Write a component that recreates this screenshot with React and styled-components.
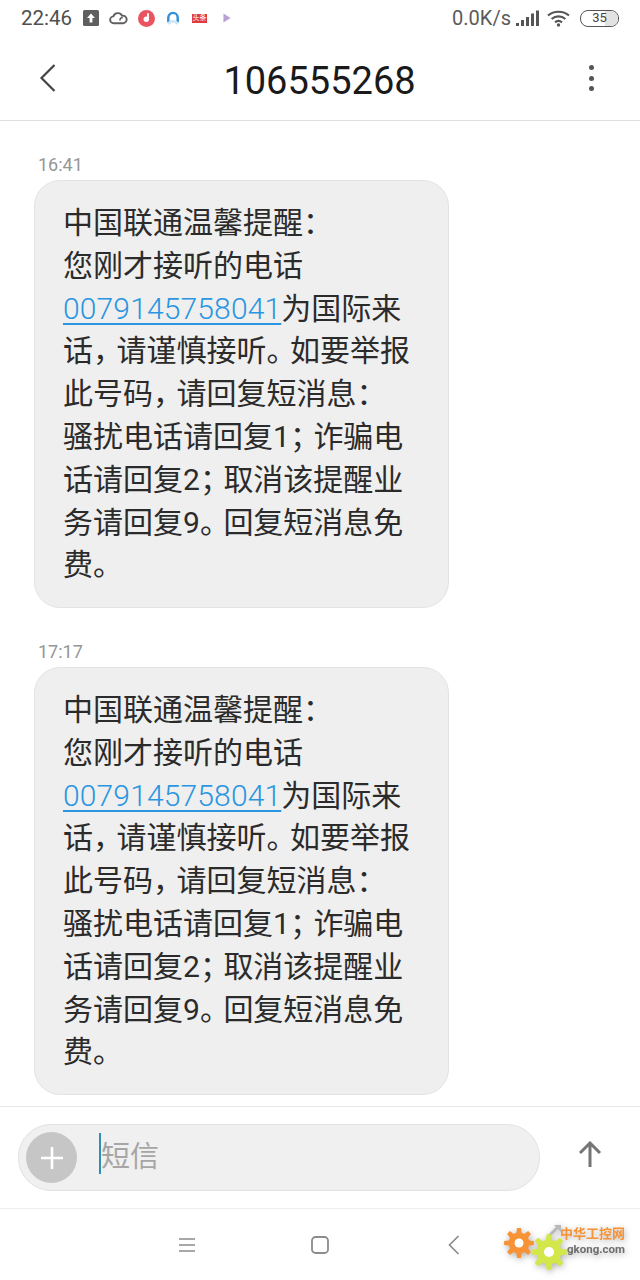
import React from 'react';
import styled, { createGlobalStyle } from 'styled-components';

const GlobalStyle = createGlobalStyle`
  html, body {
    margin: 0;
    padding: 0;
    background: #fff;
  }
  body {
    font-family: Roboto, 'Noto Sans CJK SC', sans-serif;
  }
`;

const gearPoints = (cx, cy, outer, inner, teeth) => {
  const pts = [];
  const step = (Math.PI * 2) / teeth;
  for (let i = 0; i < teeth; i++) {
    const a = i * step - Math.PI / 2;
    const corners = [
      [inner, a - step * 0.32],
      [outer, a - step * 0.17],
      [outer, a + step * 0.17],
      [inner, a + step * 0.32],
    ];
    corners.forEach(([r, t]) => {
      pts.push(`${(cx + r * Math.cos(t)).toFixed(1)},${(cy + r * Math.sin(t)).toFixed(1)}`);
    });
  }
  return pts.join(' ');
};

const Message = ({ time }) => (
  <MessageGroup>
    <Time>{time}</Time>
    <Bubble>
      <Line>中国联通温馨提醒<Punct>：</Punct></Line>
      <Line>您刚才接听的电话</Line>
      <Line><PhoneLink>0079145758041</PhoneLink>为国际来</Line>
      <Line>话<Punct>，</Punct>请谨慎接听<Punct>。</Punct>如要举报</Line>
      <Line>此号码<Punct>，</Punct>请回复短消息<Punct>：</Punct></Line>
      <Line>骚扰电话请回复1<Punct>；</Punct>诈骗电</Line>
      <Line>话请回复2<Punct>；</Punct>取消该提醒业</Line>
      <Line>务请回复9<Punct>。</Punct>回复短消息免</Line>
      <Line>费<Punct>。</Punct></Line>
    </Bubble>
  </MessageGroup>
);

const App = () => (
  <>
    <GlobalStyle />
    <Page>
      <StatusBar>
        <StatusLeft>
          <Clock>22:46</Clock>
          <svg width="16" height="16" viewBox="0 0 16 16">
            <rect width="16" height="16" rx="1.5" fill="#5f5f5f" />
            <path d="M8 3.5 12 8H9.4v4.5H6.6V8H4z" fill="#fff" />
          </svg>
          <svg width="19" height="14" viewBox="0 0 20 14">
            <path d="M5 12.5a3.6 3.6 0 0 1-.4-7.2A5 5 0 0 1 13.8 4.6 4 4 0 1 1 15 12.5Z" fill="none" stroke="#5f5f5f" strokeWidth="2" />
            <path d="M11.5 9.5a3 3 0 0 1 3-3" fill="none" stroke="#5f5f5f" strokeWidth="1.6" />
          </svg>
          <svg width="17" height="17" viewBox="0 0 18 18">
            <circle cx="9" cy="9" r="9" fill="#ea5460" />
            <path d="M10.6 3.5v6.2" stroke="#fff" strokeWidth="2" />
            <circle cx="8.8" cy="9.8" r="2.9" fill="#fff" />
          </svg>
          <BlueArc width="14" height="15" viewBox="0 0 14 16">
            <path d="M2 12V7a5 5 0 0 1 10 0v5" fill="none" stroke="#2f8fd8" strokeWidth="2.6" />
            <path d="M2 14c2-4 8-4 10 0" fill="none" stroke="#cfe6f6" strokeWidth="3" />
          </BlueArc>
          <NewsBadge><span>头条</span></NewsBadge>
          <svg width="8" height="10" viewBox="0 0 9 11">
            <path d="M0.5 0.5 8.5 5.5 0.5 10.5Z" fill="#b9a3d4" />
          </svg>
        </StatusLeft>
        <StatusRight>
          <Speed>0.0K/s</Speed>
          <svg width="23" height="17" viewBox="0 0 23 17">
            <g fill="#555">
              <rect x="0" y="13" width="3" height="3" />
              <rect x="5" y="10" width="3" height="6" />
              <rect x="10" y="7" width="3" height="9" />
              <rect x="15" y="3.5" width="3" height="12.5" />
              <rect x="20" y="0.5" width="3" height="15.5" />
            </g>
          </svg>
          <WifiIcon width="23" height="17" viewBox="0 0 23 17">
            <g fill="none" stroke="#555" strokeWidth="2.2">
              <path d="M1 5.5c6-5 15-5 21 0" />
              <path d="M4.6 9c4-3.4 9.8-3.4 13.8 0" />
              <path d="M8 12.3c2-1.6 5-1.6 7 0" />
            </g>
            <circle cx="11.5" cy="15" r="1.7" fill="#555" />
          </WifiIcon>
          <Battery>
            <BatteryFill />
            <BatteryText>35</BatteryText>
          </Battery>
        </StatusRight>
      </StatusBar>

      <Header>
        <HeaderButton>
          <svg width="18" height="30" viewBox="0 0 18 30">
            <path d="M15.5 2 2.5 15l13 13" fill="none" stroke="#444" strokeWidth="2.2" />
          </svg>
        </HeaderButton>
        <Title>106555268</Title>
        <HeaderButton>
          <Dots>
            <Dot />
            <Dot />
            <Dot />
          </Dots>
        </HeaderButton>
      </Header>

      <MessageList>
        <Message time="16:41" />
        <Message time="17:17" />
      </MessageList>

      <Composer>
        <InputPill>
          <PlusButton>
            <svg width="24" height="24" viewBox="0 0 24 24">
              <path d="M12 1v22M1 12h22" stroke="#fff" strokeWidth="2.6" />
            </svg>
          </PlusButton>
          <Caret />
          <Placeholder>短信</Placeholder>
        </InputPill>
        <SendButton>
          <svg width="24" height="27" viewBox="0 0 24 27">
            <path d="M12 26V2M2 12 12 2l10 10" fill="none" stroke="#757575" strokeWidth="3" />
          </svg>
        </SendButton>
      </Composer>

      <NavBar>
        <NavSlot>
          <svg width="18" height="16" viewBox="0 0 18 16">
            <path d="M1 2h16M1 8h16M1 14h16" stroke="#8c8c8c" strokeWidth="1.6" />
          </svg>
        </NavSlot>
        <NavSlot>
          <svg width="18" height="18" viewBox="0 0 18 18">
            <rect x="1" y="1" width="16" height="16" rx="3.5" fill="none" stroke="#8c8c8c" strokeWidth="1.8" />
          </svg>
        </NavSlot>
        <NavSlot>
          <svg width="12" height="20" viewBox="0 0 12 20">
            <path d="M10.5 1 1.5 10l9 9" fill="none" stroke="#8c8c8c" strokeWidth="1.7" />
          </svg>
        </NavSlot>
      </NavBar>

      <Watermark>
        <svg width="76" height="56" viewBox="0 0 76 56">
          <path d="M44 14 55 3" stroke="#b9b9b9" strokeWidth="3" />
          <path d="M50 2h7v7z" fill="#b9b9b9" />
          <polygon points={gearPoints(15, 20, 15, 10.5, 8)} fill="#f79334" />
          <circle cx="15" cy="20" r="4.5" fill="#fff" />
          <polygon points={gearPoints(45, 29, 18, 12.5, 8)} fill="#d3e64a" />
          <circle cx="45" cy="29" r="5" fill="#fff" />
        </svg>
        <WatermarkText>
          <WatermarkCn>中华工控网</WatermarkCn>
          <WatermarkEn>gkong.com</WatermarkEn>
        </WatermarkText>
      </Watermark>
    </Page>
  </>
);

export default App;

const Page = styled.div`
  position: relative;
  width: 640px;
  height: 1280px;
  display: flex;
  flex-direction: column;
  overflow: hidden;
  background: #fff;
`;

const StatusBar = styled.div`
  height: 36px;
  padding: 0 21px;
  display: flex;
  align-items: center;
  justify-content: space-between;
`;

const StatusLeft = styled.div`
  display: flex;
  align-items: center;
  gap: 10px;
`;

const Clock = styled.span`
  font-size: 20.5px;
  color: #4f4f4f;
  margin-right: 1px;
`;

const BlueArc = styled.svg`
  margin-left: 1px;
`;

const NewsBadge = styled.div`
  width: 15px;
  height: 9px;
  margin: 0 6px 0 2px;
  background: #e0393e;
  display: flex;
  align-items: center;
  justify-content: center;
  overflow: hidden;
  span {
    font-size: 7px;
    line-height: 9px;
    color: #fff;
    white-space: nowrap;
  }
`;

const StatusRight = styled.div`
  display: flex;
  align-items: center;
`;

const Speed = styled.span`
  font-size: 20px;
  color: #5a5a5a;
  margin-right: 5px;
`;

const WifiIcon = styled.svg`
  margin: 0 10px 0 8px;
`;

const Battery = styled.div`
  position: relative;
  width: 39px;
  height: 17px;
  box-sizing: border-box;
  border: 1.5px solid #555;
  border-radius: 8px;
  overflow: hidden;
  display: flex;
  align-items: center;
  justify-content: center;
`;

const BatteryFill = styled.div`
  position: absolute;
  top: 0;
  bottom: 0;
  right: 0;
  width: 13px;
  background: #e2e2e2;
`;

const BatteryText = styled.span`
  position: relative;
  font-size: 13px;
  line-height: 14px;
  color: #444;
`;

const Header = styled.div`
  height: 85px;
  padding: 0 39px 0 38px;
  box-sizing: border-box;
  border-bottom: 1px solid #dedede;
  display: flex;
  align-items: center;
  justify-content: space-between;
`;

const HeaderButton = styled.div`
  width: 20px;
  display: flex;
  justify-content: center;
`;

const Title = styled.div`
  margin-top: 6px;
  font-size: 38px;
  color: #1a1a1a;
`;

const Dots = styled.div`
  display: flex;
  flex-direction: column;
  gap: 5.5px;
`;

const Dot = styled.span`
  width: 5px;
  height: 5px;
  border-radius: 50%;
  background: #555;
`;

const MessageList = styled.div`
  flex: 1;
  padding: 32px 0 0 34px;
  display: flex;
  flex-direction: column;
  gap: 32px;
  overflow: hidden;
`;

const MessageGroup = styled.div`
  display: flex;
  flex-direction: column;
  align-items: flex-start;
`;

const Time = styled.div`
  margin-left: 4px;
  height: 27px;
  line-height: 24px;
  font-size: 18px;
  color: #969696;
`;

const Bubble = styled.div`
  width: 415px;
  height: 428px;
  box-sizing: border-box;
  padding: 21px 0 0 28px;
  background: #efefef;
  border: 1px solid #e3e3e3;
  border-radius: 26px;
`;

const Line = styled.div`
  height: 42.8px;
  line-height: 42.8px;
  font-size: 30px;
  color: #2b2b2b;
  white-space: nowrap;
`;

const Punct = styled.span`
  letter-spacing: -6.5px;
`;

const PhoneLink = styled.span`
  font-weight: 300;
  letter-spacing: 0.15px;
  color: #2a95e0;
  text-decoration: underline;
  text-underline-offset: 4px;
  text-decoration-thickness: 1.5px;
`;

const Composer = styled.div`
  height: 103px;
  box-sizing: border-box;
  border-top: 1px solid #e6e6e6;
  border-bottom: 1px solid #eeeeee;
  padding-left: 18px;
  display: flex;
  align-items: center;
`;

const InputPill = styled.div`
  width: 522px;
  height: 67px;
  box-sizing: border-box;
  padding-left: 7px;
  background: #f0f0f0;
  border: 1px solid #e2e2e2;
  border-radius: 33px;
  display: flex;
  align-items: center;
`;

const PlusButton = styled.div`
  width: 51px;
  height: 51px;
  border-radius: 50%;
  background: #c6c6c6;
  display: flex;
  align-items: center;
  justify-content: center;
`;

const Caret = styled.span`
  width: 2px;
  height: 41px;
  margin: 0 0 9px 22px;
  background: #2d8fb4;
`;

const Placeholder = styled.span`
  padding-bottom: 8px;
  font-size: 29px;
  color: #a6a6a6;
`;

const SendButton = styled.div`
  flex: 1;
  display: flex;
  justify-content: center;
  padding-bottom: 6px;
`;

const NavBar = styled.div`
  flex: none;
  height: 71px;
  display: flex;
  align-items: center;
  justify-content: center;
`;

const NavSlot = styled.div`
  width: 133.5px;
  display: flex;
  justify-content: center;
`;

const Watermark = styled.div`
  position: absolute;
  left: 504px;
  top: 1223px;
  display: flex;
  align-items: flex-start;
  filter: drop-shadow(1px 2px 3px rgba(0, 0, 0, 0.3));
`;

const WatermarkText = styled.div`
  margin: 3px 0 0 -20px;
  display: flex;
  flex-direction: column;
  align-items: flex-end;
  font-weight: 700;
`;

const WatermarkCn = styled.span`
  font-size: 13px;
  line-height: 16px;
  color: #f79334;
`;

const WatermarkEn = styled.span`
  font-size: 11.5px;
  line-height: 15px;
  color: #6e6e6e;
`;
